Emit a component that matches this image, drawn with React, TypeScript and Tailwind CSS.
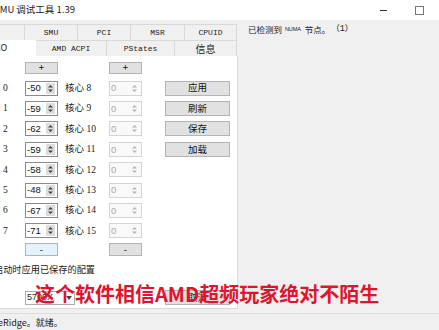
const CJK = '"Noto Sans CJK SC", "Noto Sans", sans-serif';
const SERIF = '"Liberation Serif", "Noto Sans CJK SC", serif';
const MONO = '"Liberation Mono", "Noto Sans CJK SC", monospace';

const ROWS = [
  { n: 0, v: '-50' },
  { n: 1, v: '-59' },
  { n: 2, v: '-62' },
  { n: 3, v: '-59' },
  { n: 4, v: '-58' },
  { n: 5, v: '-48' },
  { n: 6, v: '-67' },
  { n: 7, v: '-71' },
];

const ACTIONS = ['应用', '刷新', '保存', '加载'];

function Arrows({ disabled }: { disabled?: boolean }) {
  const c = disabled ? '#b5b5b5' : '#444';
  return (
    <svg width="5" height="9" viewBox="0 0 5 9">
      <path d="M0 3.5 L2.5 1 L5 3.5 Z" fill={c} />
      <path d="M0 5.5 L2.5 8 L5 5.5 Z" fill={c} />
    </svg>
  );
}

function Spin({ value, disabled }: { value: string; disabled?: boolean }) {
  return (
    <div
      className={`w-[33px] h-[15px] flex items-center border ${
        disabled ? 'border-[#d4d4d4] bg-[#f9f9f9] text-[#a8a8a8]' : 'border-[#8a8a8a] bg-white text-[#111]'
      }`}
    >
      <span className="flex-1 pl-[1px] text-[9.5px] leading-none" style={{ fontFamily: '"Liberation Sans", sans-serif' }}>
        {value}
      </span>
      <span
        className={`w-[9px] h-[11px] mr-[2px] flex items-center justify-center ${
          disabled ? '' : 'bg-[#dcdcdc]'
        }`}
      >
        <Arrows disabled={disabled} />
      </span>
    </div>
  );
}

function Btn({ children, className = '' }: { children: React.ReactNode; className?: string }) {
  return (
    <div
      className={`flex items-center justify-center border border-[#b4b4b4] bg-[#e1e1e1] text-[#111] text-[9.5px] leading-none ${className}`}
      style={{ fontFamily: CJK }}
    >
      {children}
    </div>
  );
}

export default function App() {
  return (
    <div className="relative w-[439px] h-[330px] overflow-hidden bg-[#f0f0f0] flex flex-col" style={{ fontFamily: CJK }}>
      {/* title bar */}
      <div className="h-[20px] shrink-0 bg-white flex items-center">
        <span className="ml-[-6px] text-[9.5px] text-[#222] leading-none">SMU 调试工具 1.39</span>
        <div className="ml-auto flex items-center">
          <span className="w-[7px] h-[1px] bg-[#333] mr-[28px]" />
          <span className="w-[9px] h-[9px] border border-[#777] mr-[15px]" />
        </div>
      </div>

      {/* main */}
      <div className="flex flex-1 min-h-0">
        <div className="w-[238px] shrink-0 flex flex-col pt-[4px] pb-[4px]">
          {/* tab row 1 */}
          <div className="flex h-[16px] text-[8px] text-[#222]" style={{ fontFamily: MONO }}>
            {[
              ['', 25],
              ['SMU', 53],
              ['PCI', 53],
              ['MSR', 54],
              ['CPUID', 52],
            ].map(([t, w]) => (
              <div
                key={String(t) + w}
                className="flex items-center justify-center border-t border-r border-[#d9d9d9] bg-[#f0f0f0]"
                style={{ width: Number(w) }}
              >
                {t}
              </div>
            ))}
          </div>
          {/* tab row 2 */}
          <div className="flex h-[16px] text-[8px] text-[#222]" style={{ fontFamily: MONO }}>
            <div className="w-[36px] flex items-center bg-white pl-0">
              <span className="ml-[-5px] text-[9px]" style={{ fontFamily: CJK }}>CO</span>
            </div>
            <div className="w-[71px] flex items-center justify-center border-t border-r border-[#d9d9d9]">AMD ACPI</div>
            <div className="w-[68px] flex items-center justify-center border-t border-r border-[#d9d9d9]">PStates</div>
            <div className="w-[62px] flex items-center justify-center border-t border-r border-[#d9d9d9] text-[10px]" style={{ fontFamily: CJK }}>
              信息
            </div>
          </div>

          {/* panel */}
          <div className="flex-1 bg-white border-r border-b border-[#d9d9d9] flex flex-col">
            <div className="flex mt-[6px]">
              <Btn className="ml-[25px] w-[33px] h-[12px]">+</Btn>
              <Btn className="ml-[51px] w-[33px] h-[12px]">+</Btn>
            </div>

            <div className="mt-[4px] flex flex-col">
              {ROWS.map((r, i) => (
                <div key={r.n} className="h-[20.4px] flex items-center">
                  <span className="w-[25px] pl-[3px] text-[9.5px] text-[#222]" style={{ fontFamily: SERIF }}>
                    {r.n}
                  </span>
                  <Spin value={r.v} />
                  <span className="ml-[7px] w-[44px] text-[9.5px] text-[#222]" style={{ fontFamily: SERIF }}>
                    核心 {r.n + 8}
                  </span>
                  <Spin value="0" disabled />
                  {ACTIONS[i] && <Btn className="ml-[23px] w-[65px] h-[15px]">{ACTIONS[i]}</Btn>}
                </div>
              ))}
            </div>

            <div className="flex mt-[2px]">
              <Btn className="ml-[25px] w-[33px] h-[13px] border-[#0078d7] bg-[#e5f1fb]">-</Btn>
              <Btn className="ml-[51px] w-[33px] h-[13px]">-</Btn>
            </div>

            <div className="mt-[7px] h-[12px] flex items-center">
              <span className="ml-[-6px] text-[9.2px] text-[#222] leading-none">启动时应用已保存的配置</span>
            </div>

            <div className="mt-[15px] flex items-center">
              <div className="ml-[25px] w-[50px] h-[14px] border border-[#adadad] bg-white flex items-center text-[9px] text-[#222]" style={{ fontFamily: '"Liberation Sans", sans-serif' }}>
                <span className="flex-1 pl-[1px]">5700X</span>
                <svg width="6" height="4" viewBox="0 0 6 4" className="mr-[2px]">
                  <path d="M0 0 L6 0 L3 4 Z" fill="#444" />
                </svg>
              </div>
              <Btn className="ml-[90px] w-[65px] h-[15px]">取消</Btn>
            </div>
          </div>
        </div>

        {/* right side */}
        <div className="flex-1 pl-[10px] pt-[5px]">
          <div className="flex items-center text-[8.5px] text-[#222] leading-none">
            <span>已检测到</span>
            <span className="ml-[3px] text-[5.5px] tracking-tight" style={{ fontFamily: '"Liberation Sans", sans-serif' }}>NUMA</span>
            <span className="ml-[4px]">节点。</span>
            <span className="ml-[1px]" style={{ fontFamily: MONO }}>（1）</span>
          </div>
        </div>
      </div>

      {/* status bar */}
      <div className="h-[17px] shrink-0 border-t border-[#dcdcdc] bg-[#f0f0f0] flex items-center">
        <span className="ml-[-2px] text-[9px] text-[#222] leading-none">eRidge。就绪。</span>
      </div>

      {/* caption overlay */}
      <div
        className="absolute left-[35px] top-[284px] text-[20px] font-bold leading-none text-[#e3132c] whitespace-nowrap"
        style={{ fontFamily: CJK }}
      >
        这个软件相信AMD超频玩家绝对不陌生
      </div>
    </div>
  );
}
